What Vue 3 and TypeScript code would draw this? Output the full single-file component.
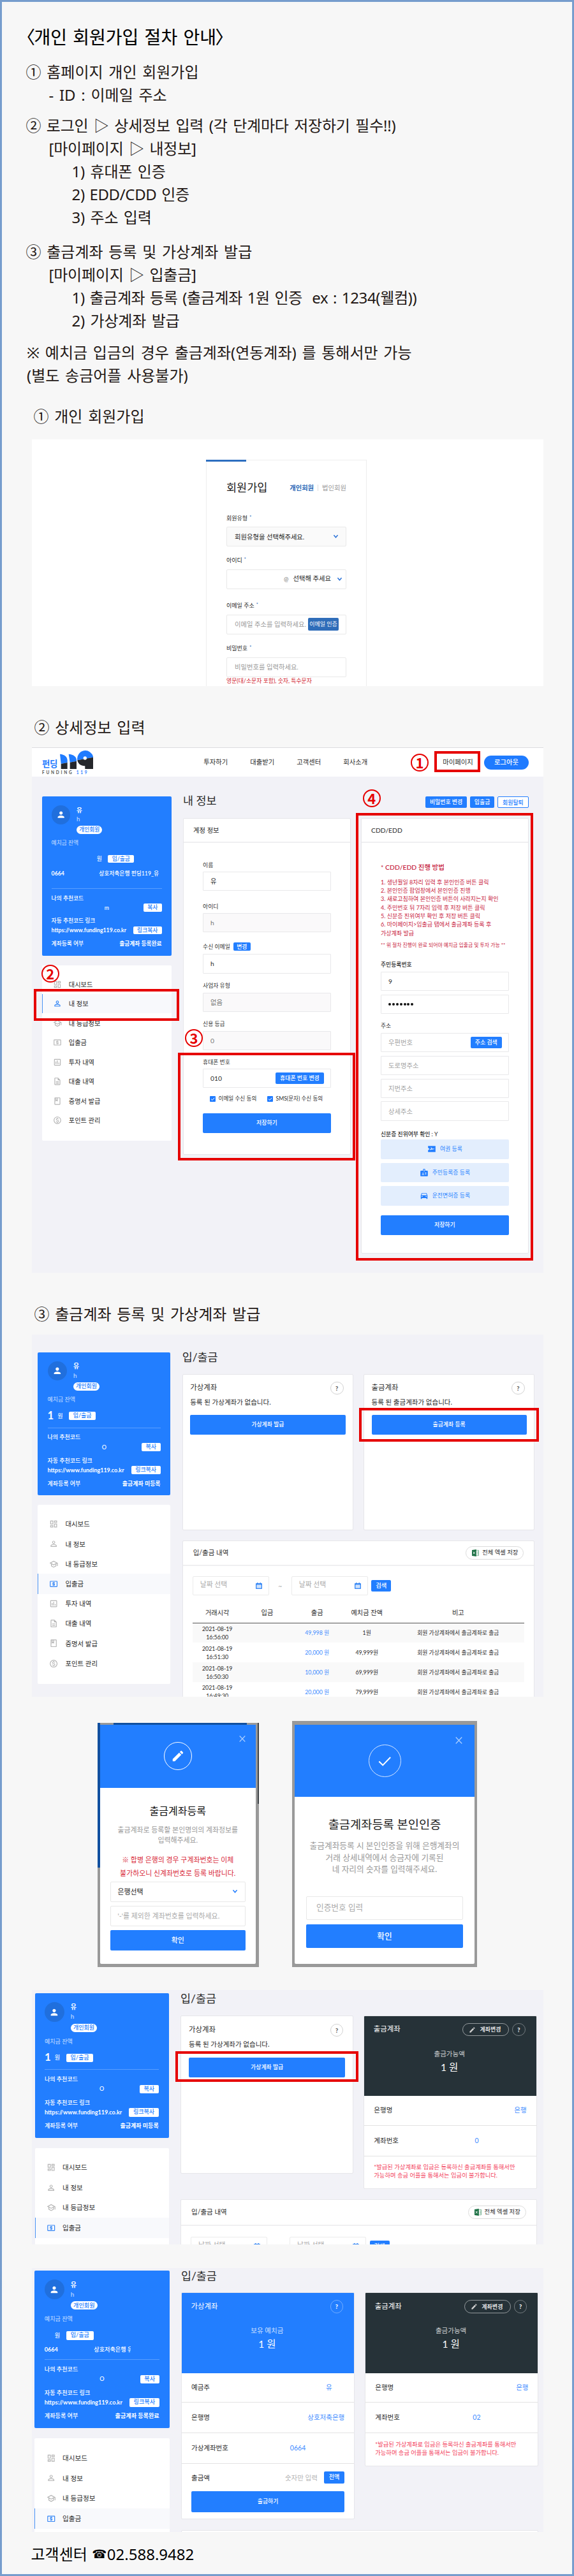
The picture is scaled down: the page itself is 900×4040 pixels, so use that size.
<script setup lang="ts">
interface Account { no: string; holder: string }
interface Screen {
  id: 'profile' | 'empty' | 'issue' | 'done'
  heading?: string
  amount: string
  code: string
  status: string
  account?: Account
  active: number
  items: number
}

const icons: Record<string, string> = {
  person: 'M12 12c2.21 0 4-1.79 4-4s-1.79-4-4-4-4 1.79-4 4 1.79 4 4 4zm0 2c-2.67 0-8 1.34-8 4v2h16v-2c0-2.66-5.33-4-8-4z',
  edit: 'M3 17.25V21h3.75L17.81 9.94l-3.75-3.75L3 17.25zM20.71 7.04c.39-.39.39-1.02 0-1.41l-2.34-2.34c-.39-.39-1.02-.39-1.41 0l-1.83 1.83 3.75 3.75 1.83-1.83z',
  calendar: 'M20 4h-2V2h-3v2H9V2H6v2H4c-1.1 0-2 .9-2 2v14c0 1.1.9 2 2 2h16c1.1 0 2-.9 2-2V6c0-1.1-.9-2-2-2zm-1 15H5V9h14v10zM7 11h2v2H7zm4 0h2v2h-2zm4 0h2v2h-2zM7 15h2v2H7zm4 0h2v2h-2zm4 0h2v2h-2z',
  ticket: 'M2 4h20v16H2v-5c1.6 0 3-1.300 3-3S3.600 9 2 9V4zm7 4 2 4-2 .6-1.200-1.200H6.500l1.200 3.200L18 12.500c1-.3 1-1.700-.4-1.600l-3.200.6L11 8H9z',
  idcard: 'M20 7h-5V4c0-1.100-.9-2-2-2h-2c-1.100 0-2 .9-2 2v3H4c-1.100 0-2 .9-2 2v11c0 1.100.9 2 2 2h16c1.100 0 2-.9 2-2V9c0-1.100-.9-2-2-2zM11 4h2v5h-2V4zM9 12c.8 0 1.500.7 1.500 1.500S9.800 15 9 15s-1.500-.7-1.500-1.500S8.200 12 9 12zm3 6H6v-.8c0-1 2-1.500 3-1.500s3 .5 3 1.500v.8zm6-1.500h-4V15h4v1.500zm0-3h-4V12h4v1.500z',
  car: 'M18.92 6.010C18.720 5.420 18.160 5 17.500 5h-11c-.66 0-1.210.42-1.420 1.010L3 12v8c0 .55.45 1 1 1h1c.55 0 1-.45 1-1v-1h12v1c0 .55.45 1 1 1h1c.55 0 1-.45 1-1v-8l-2.080-5.990zM6.500 16c-.83 0-1.500-.67-1.500-1.500S5.670 13 6.500 13s1.500.67 1.500 1.500S7.330 16 6.500 16zm11 0c-.83 0-1.500-.67-1.500-1.500s.67-1.500 1.500-1.500 1.500.67 1.500 1.500-.67 1.500-1.500 1.500zM5 11l1.500-4.500h11L19 11H5z',
}

const menu: { label: string; d: string }[] = [
  { label: '대시보드', d: 'M19 5v2h-4V5h4M9 5v6H5V5h4m10 8v6h-4v-6h4M9 17v2H5v-2h4M21 3h-8v6h8V3zM11 3H3v10h8V3zm10 8h-8v10h8V11zm-10 4H3v6h8v-6z' },
  { label: '내 정보', d: 'M12 5.900c1.160 0 2.100.94 2.100 2.100s-.94 2.100-2.100 2.100S9.900 9.160 9.900 8s.94-2.100 2.100-2.100m0 9c2.970 0 6.100 1.460 6.100 2.100v1.100H5.900V17c0-.64 3.130-2.100 6.100-2.100M12 4C9.790 4 8 5.790 8 8s1.790 4 4 4 4-1.790 4-4-1.790-4-4-4zm0 9c-2.670 0-8 1.340-8 4v3h16v-3c0-2.660-5.330-4-8-4z' },
  { label: '내 등급정보', d: 'M12 3L1 9l4 2.180v6L12 21l7-3.820v-6l2-1.090V17h2V9L12 3zm6.820 6L12 12.720 5.180 9 12 5.280 18.820 9zM17 15.990l-5 2.730-5-2.730v-3.720L12 15l5-2.730v3.720z' },
  { label: '입출금', d: 'M11 17h2v-1h1c.55 0 1-.45 1-1v-3c0-.55-.45-1-1-1h-3v-1h4V8h-2V7h-2v1h-1c-.55 0-1 .45-1 1v3c0 .55.45 1 1 1h3v1H9v2h2v1zm9-13H4c-1.110 0-1.990.89-1.990 2L2 18c0 1.110.89 2 2 2h16c1.110 0 2-.89 2-2V6c0-1.110-.89-2-2-2zm0 14H4V6h16v12z' },
  { label: '투자 내역', d: 'M9 17H7v-7h2v7zm4 0h-2V7h2v10zm4 0h-2v-4h2v4zm2 2H5V5h14v14zm0-16H5c-1.100 0-2 .9-2 2v14c0 1.100.9 2 2 2h14c1.100 0 2-.9 2-2V5c0-1.100-.9-2-2-2z' },
  { label: '대출 내역', d: 'M8 16h8v2H8zm0-4h8v2H8zm6-10H6c-1.100 0-2 .9-2 2v16c0 1.100.89 2 1.990 2H18c1.100 0 2-.9 2-2V8l-6-6zm4 18H6V4h7v5h5v11z' },
  { label: '증명서 발급', d: 'M18 2H6c-1.100 0-2 .9-2 2v16c0 1.100.9 2 2 2h12c1.100 0 2-.9 2-2V4c0-1.100-.9-2-2-2zM9 4h2v5l-1-.75L9 9V4zm9 16H6V4h1v9l3-2.250L13 13V4h5v16z' },
  { label: '포인트 관리', d: 'M12 2C6.480 2 2 6.480 2 12s4.480 10 10 10 10-4.480 10-10S17.520 2 12 2zm0 18c-4.410 0-8-3.590-8-8s3.590-8 8-8 8 3.590 8 8-3.590 8-8 8zm.31-8.860c-1.770-.45-2.340-.94-2.340-1.670 0-.84.79-1.430 2.100-1.430 1.380 0 1.900.66 1.940 1.640h1.710c-.05-1.340-.87-2.570-2.490-2.970V5H10.900v1.690c-1.510.32-2.720 1.300-2.720 2.810 0 1.790 1.490 2.690 3.660 3.210 1.950.46 2.340 1.150 2.340 1.870 0 .53-.39 1.390-2.100 1.390-1.600 0-2.230-.72-2.320-1.640H8.040c.1 1.700 1.360 2.660 2.860 2.970V19h2.340v-1.670c1.520-.29 2.720-1.160 2.730-2.770-.01-2.200-1.900-2.960-3.660-3.420z' },
]

const screens: Screen[] = [
  { id: 'profile', heading: '② 상세정보 입력', amount: '', code: 'm', status: '출금계좌 등록완료', account: { no: '0664', holder: '상호저축은행 펀딩119_유' }, active: 1, items: 8 },
  { id: 'empty', heading: '③ 출금계좌 등록 및 가상계좌 발급', amount: '1', code: 'O', status: '출금계좌 미등록', active: 3, items: 8 },
  { id: 'issue', amount: '1', code: 'O', status: '출금계좌 미등록', active: 3, items: 4 },
  { id: 'done', amount: '', code: 'O', status: '출금계좌 등록완료', account: { no: '0664', holder: '상호저축은행 유' }, active: 3, items: 4 },
]

const guide: { lv: number; text: string; cls?: string }[][] = [
  [
    { lv: 0, text: '① 홈페이지 개인 회원가입' },
    { lv: 1, text: '- ID : 이메일 주소' },
  ],
  [
    { lv: 0, text: '② 로그인 ▷ 상세정보 입력 (각 단계마다 저장하기 필수!!)', cls: 'snug' },
    { lv: 1, text: '[마이페이지 ▷ 내정보]', cls: 'snug' },
    { lv: 2, text: '1) 휴대폰 인증', cls: 'snug' },
    { lv: 2, text: '2) EDD/CDD 인증', cls: 'tight' },
    { lv: 2, text: '3) 주소 입력', cls: 'snug' },
  ],
  [
    { lv: 0, text: '③ 출금계좌 등록 및 가상계좌 발급' },
    { lv: 1, text: '[마이페이지 ▷ 입출금]', cls: 'snug' },
    { lv: 2, text: '1) 출금계좌 등록 (출금계좌 1원 인증  ex : 1234(웰컴))', cls: 'tight' },
    { lv: 2, text: '2) 가상계좌 발급', cls: 'snug' },
  ],
  [
    { lv: 0, text: '※ 예치금 입금의 경우 출금계좌(연동계좌) 를 통해서만 가능' },
    { lv: 0, text: '(별도 송금어플 사용불가)' },
  ],
]

const nav = ['투자하기', '대출받기', '고객센터', '회사소개']

const accountFields = [
  { label: '이름', value: '유', locked: false },
  { label: '아이디', value: 'h', locked: true },
  { label: '수신 이메일', value: 'h', locked: false, badge: '변경' },
  { label: '사업자 유형', value: '없음', locked: true },
  { label: '신용 등급', value: '0', locked: true },
  { label: '휴대폰 번호', value: '010', locked: false, action: '휴대폰 번호 변경' },
]

const steps = [
  '1. 생년월일 8자리 입력 후 본인인증 버튼 클릭',
  '2. 본인인증 팝업창에서 본인인증 진행',
  '3. 새로고침하여 본인인증 버튼이 사라지는지 확인',
  '4. 주민번호 뒤 7자리 입력 후 저장 버튼 클릭',
  '5. 신분증 진위여부 확인 후 저장 버튼 클릭',
  '6. 마이페이지>입출금 탭에서 출금계좌 등록 후',
  '가상계좌 발급',
]

const idDocs = [
  { icon: 'ticket', label: '여권 등록' },
  { icon: 'idcard', label: '주민등록증 등록' },
  { icon: 'car', label: '운전면허증 등록' },
]

const history = [
  { time: '16:56:00', out: '49,998 원', left: '1원' },
  { time: '16:51:30', out: '20,000 원', left: '49,999원' },
  { time: '16:50:30', out: '10,000 원', left: '69,999원' },
  { time: '16:49:30', out: '20,000 원', left: '79,999원' },
]
</script>

<template>
  <div class="page">
    <h1><i class="lt">〈</i>개인 회원가입 절차 안내<i class="gt">〉</i></h1>
    <div v-for="(g, gi) in guide" :key="gi" class="guide" :class="'g' + gi">
      <p v-for="l in g" :key="l.text" :class="['lv' + l.lv, l.cls]">{{ l.text }}</p>
    </div>

    <h2 class="h-signup">① 개인 회원가입</h2>
    <section class="signup">
      <div class="s-card">
        <div class="s-head">
          <b>회원가입</b>
          <div class="s-tabs"><span class="on">개인회원</span><i></i><span>법인회원</span></div>
        </div>
        <label class="l1">회원유형<sup>*</sup></label>
        <div class="s-box grey"><span>회원유형을 선택해주세요.</span>
          <svg class="chev" viewBox="0 0 10 8"><path d="M1.500 1.500 5 5.500 8.500 1.500" /></svg></div>
        <label class="l2">아이디<sup>*</sup></label>
        <div class="s-box mail"><small>@</small><span>선택해 주세요</span>
          <svg class="chev" viewBox="0 0 10 8"><path d="M1.500 1.500 5 5.500 8.500 1.500" /></svg></div>
        <label class="l3">이메일 주소<sup>*</sup></label>
        <div class="s-box ph"><span>이메일 주소를 입력하세요.</span><em>이메일 인증</em></div>
        <label class="l4">비밀번호<sup>*</sup></label>
        <div class="s-box ph"><span>비밀번호를 입력하세요.</span></div>
        <p class="s-err">영문(대/소문자 포함), 숫자, 특수문자</p>
      </div>
    </section>

    <template v-for="s in screens" :key="s.id">
      <h2 v-if="s.heading" :class="'h-' + s.id">{{ s.heading }}</h2>
      <section class="panel" :class="s.id">
        <header v-if="s.id === 'profile'" class="top">
          <div class="logo">
            <div class="logo-row">
              <b>펀딩</b>
              <svg viewBox="281 200 157 87">
                <path fill="#1f7bff" d="M281 217 286 263 316 257V246C316 230 302 218 281 217ZM322 217 328 256 359 250V245C359 230 345 218 322 217ZM363 246A37.500 38 0 0 1 438 232Z" />
                <path fill="#25272b" d="M286 263 316 257V287H286ZM328 256 359 250V287H328ZM363 246 438 232V287H399V273C380 274 365 262 363 246Z" />
                <circle cx="399" cy="236" r="8" fill="#fff" />
              </svg>
            </div>
            <div class="logo-sub">FUNDING <i>119</i></div>
          </div>
          <nav><span v-for="n in nav" :key="n">{{ n }}</span></nav>
          <span class="mypage">마이페이지</span>
          <span class="logout">로그아웃</span>
        </header>

        <div class="body">
          <aside>
            <div class="user">
              <div class="u-head">
                <div class="avatar"><svg viewBox="0 0 24 24"><path :d="icons.person" /></svg></div>
                <div class="ident"><b>유</b><span>h</span><em>개인회원</em></div>
              </div>
              <div class="u-cap">예치금 잔액</div>
              <div class="u-bal"><b>{{ s.amount }}</b><span>원</span><em>입/출금</em></div>
              <div v-if="s.account" class="u-acc"><span>{{ s.account.no }}</span><span class="holder">{{ s.account.holder }}</span></div>
              <hr />
              <div class="u-t1">나의 추천코드</div>
              <div class="u-row code"><span>{{ s.code }}</span><em>복사</em></div>
              <div class="u-t2">자동 추천코드 링크</div>
              <div class="u-row link"><span>https://www.funding119.co.kr</span><em>링크복사</em></div>
              <div class="u-row reg"><span>계좌등록 여부</span><b>{{ s.status }}</b></div>
            </div>
            <ul class="menu">
              <li v-for="(m, i) in menu.slice(0, s.items)" :key="m.label" :class="{ active: i === s.active }">
                <svg viewBox="0 0 24 24"><path :d="m.d" fill-rule="evenodd" /></svg>{{ m.label }}
              </li>
            </ul>
          </aside>

          <main v-if="s.id === 'profile'">
            <div class="p-title">
              <h3>내 정보</h3>
              <span class="btn">비밀번호 변경</span><span class="btn">입출금</span><span class="btn line">회원탈퇴</span>
            </div>
            <div class="p-cards">
              <div class="card acct">
                <div class="c-head">계정 정보</div>
                <div v-for="f in accountFields" :key="f.label" class="field">
                  <label>{{ f.label }}<em v-if="f.badge">{{ f.badge }}</em></label>
                  <div class="box" :class="{ locked: f.locked }">{{ f.value }}<span v-if="f.action" class="btn">{{ f.action }}</span></div>
                </div>
                <div class="checks">
                  <span v-for="c in ['이메일 수신 동의', 'SMS(문자) 수신 동의']" :key="c">
                    <svg viewBox="0 0 9 9"><rect width="9" height="9" rx="1" fill="#1f7bff" /><path d="M2 4.600 3.900 6.400 7.200 2.800" fill="none" stroke="#fff" /></svg>{{ c }}
                  </span>
                </div>
                <div class="save">저장하기</div>
              </div>
              <div class="card cdd">
                <div class="c-head">CDD/EDD</div>
                <div class="how">* CDD/EDD 진행 방법</div>
                <ol><li v-for="t in steps" :key="t">{{ t }}</li></ol>
                <div class="note">** 위 절차 진행이 완료 되어야 예치금 입출금 및 투자 가능 **</div>
                <label class="b">주민등록번호</label>
                <div class="box">9</div>
                <div class="box dots"><i v-for="n in 7" :key="n"></i></div>
                <label class="addr">주소</label>
                <div class="box ph">우편번호<span class="btn">주소 검색</span></div>
                <div class="box ph">도로명주소</div>
                <div class="box ph">지번주소</div>
                <div class="box ph">상세주소</div>
                <label class="b verify">신분증 진위여부 확인 <span>: Y</span></label>
                <div v-for="d in idDocs" :key="d.label" class="doc">
                  <svg viewBox="0 0 24 24"><path :d="icons[d.icon]" fill-rule="evenodd" /></svg>{{ d.label }}
                </div>
                <div class="save">저장하기</div>
              </div>
            </div>
          </main>

          <main v-else>
            <h3>입/출금</h3>
            <div class="w-cards">
              <div v-if="s.id !== 'done'" class="card w-empty">
                <div class="w-head"><span>가상계좌</span><q>?</q></div>
                <p>등록 된 가상계좌가 없습니다.</p>
                <div class="save">가상계좌 발급</div>
              </div>
              <div v-else class="card w-bank">
                <div class="w-top blue">
                  <div class="w-head"><span>가상계좌</span><q>?</q></div>
                  <div class="w-cap">보유 예치금</div>
                  <div class="w-amt">1 원</div>
                </div>
                <div class="kv"><span>예금주</span><a class="owner">유</a></div>
                <div class="kv"><span>은행명</span><a>상호저축은행</a></div>
                <div class="kv"><span>가상계좌번호</span><a class="vno">0664</a></div>
                <div class="kv out"><span>출금액</span><small>숫자만 입력</small><em>전액</em></div>
                <div class="save">출금하기</div>
              </div>

              <div v-if="s.id === 'empty'" class="card w-empty">
                <div class="w-head"><span>출금계좌</span><q>?</q></div>
                <p>등록 된 출금계좌가 없습니다.</p>
                <div class="save">출금계좌 등록</div>
              </div>
              <div v-else class="card w-bank short">
                <div class="w-top dark">
                  <div class="w-head"><span>출금계좌</span>
                    <div class="chg"><svg viewBox="0 0 24 24"><path :d="icons.edit" /></svg>계좌변경</div><q>?</q></div>
                  <div class="w-cap">출금가능액</div>
                  <div class="w-amt">1 원</div>
                </div>
                <div class="kv"><span>은행명</span><a>은행</a></div>
                <div class="kv"><span>계좌번호</span><a class="ano">{{ s.id === 'done' ? '02' : '0' }}</a></div>
                <div class="warn">*발급된 가상계좌로 입금은 등록하신 출금계좌를 통해서만<br />가능하며 송금 어플을 통해서는 입금이 불가합니다.</div>
              </div>
            </div>

            <div class="card hist">
              <template v-if="s.id !== 'done'">
                <div class="h-head"><span>입/출금 내역</span>
                  <div class="xls"><svg viewBox="0 0 12 12"><path fill="#1d7145" d="M0 1 7.500 0v12L0 11z" /><path d="M8 1.500h3.500v9H8M9 4h2M9 6h2M9 8h2" fill="none" stroke="#4c9a70" stroke-width=".8" /><path d="m2 4 3.200 4M5.200 4 2 8" stroke="#fff" /></svg>전체 엑셀 저장</div>
                </div>
                <div class="dates">
                  <div class="date">날짜 선택<svg viewBox="0 0 24 24"><path :d="icons.calendar" fill-rule="evenodd" /></svg></div>
                  <span>~</span>
                  <div class="date">날짜 선택<svg viewBox="0 0 24 24"><path :d="icons.calendar" fill-rule="evenodd" /></svg></div>
                  <b>검색</b>
                </div>
                <div v-if="s.id === 'empty'" class="table">
                  <div class="tr th"><span>거래시각</span><span>입금</span><span>출금</span><span>예치금 잔액</span><span>비고</span></div>
                  <div v-for="r in history" :key="r.time" class="tr">
                    <span>2021-08-19<br />{{ r.time }}</span><span></span><span class="out">{{ r.out }}</span><span>{{ r.left }}</span><span>회원 가상계좌에서 출금계좌로 출금</span>
                  </div>
                </div>
              </template>
            </div>
          </main>
        </div>

        <template v-if="s.id === 'profile'">
          <div class="mark m1"></div><div class="mark m2"></div><div class="mark m3"></div><div class="mark m4"></div>
          <div v-for="n in 4" :key="n" class="num" :class="'n' + n">{{ n }}</div>
        </template>
        <div v-else-if="s.id !== 'done'" class="mark"></div>
      </section>

      <div v-if="s.id === 'empty'" class="modals">
        <div class="shade sh1">
          <div class="modal">
            <div class="m-top">
              <svg class="x" viewBox="0 0 10 10"><path d="M.7.5 9.300 9.500M9.300.5.7 9.500" /></svg>
              <div class="ring"><svg viewBox="0 0 24 24"><path :d="icons.edit" fill="#fff" /></svg></div>
            </div>
            <h4>출금계좌등록</h4>
            <p class="m-desc">출금계좌로 등록할 본인명의의 계좌정보를<br />입력해주세요.</p>
            <p class="m-red">※ 합병 은행의 경우 구계좌번호는 이체<br />불가하오니 신계좌번호로 등록 바랍니다.</p>
            <div class="m-box sel">은행선택<svg class="chev" viewBox="0 0 10 8"><path d="M1.500 1.500 5 5.500 8.500 1.500" /></svg></div>
            <div class="m-box">'-'를 제외한 계좌번호를 입력하세요.</div>
            <div class="m-ok">확인</div>
          </div>
        </div>
        <div class="shade sh2">
          <div class="modal">
            <div class="m-top">
              <svg class="x" viewBox="0 0 10 10"><path d="M.7.5 9.300 9.500M9.300.5.7 9.500" /></svg>
              <div class="ring"><svg viewBox="0 0 24 24"><path d="M2.500 12.500 9 19 22 5.500" fill="none" stroke="#fff" stroke-width="2.200" /></svg></div>
            </div>
            <h4>출금계좌등록 본인인증</h4>
            <p class="m-desc">출금계좌등록 시 본인인증을 위해 은행계좌의<br />거래 상세내역에서 송금자에 기록된<br />네 자리의 숫자를 입력해주세요.</p>
            <div class="m-box">인증번호 입력</div>
            <div class="m-ok">확인</div>
          </div>
        </div>
      </div>
    </template>

    <footer><span>고객센터</span><i>☎</i><span class="tel">02.588.9482</span></footer>
  </div>
</template>

<style>
body { margin: 0; background: #f7f7f7; }
</style>

<style scoped>
* { box-sizing: border-box; margin: 0; padding: 0; }
em, i { font-style: normal; }
.page {
  width: 900px; height: 4040px; overflow: hidden; border: 3px solid #769dcd; background: #f7f7f7;
  font-family: "Noto Sans", "Noto Sans CJK KR", sans-serif; font-size: 24px; line-height: 36px; color: #231815;
}
h1 { margin: 35px 0 0 38px; height: 38px; line-height: 38px; font-size: 28px; font-weight: 400; -webkit-text-stroke: .15px #000; font-family: "Noto Sans CJK KR", sans-serif; font-feature-settings: "halt"; color: #000; word-spacing: 3px; }
h1 .lt { margin-right: -1.500px; }
h1 .gt { margin-left: -1.500px; }
.guide { word-spacing: 2.500px; white-space: pre; }
.guide p { height: 36px; }
.snug { letter-spacing: -.2px; }
.tight { letter-spacing: -.35px; word-spacing: 1.800px; }
.g0 { margin-top: 19px; }
.g1 { margin-top: 12px; }
.g2 { margin-top: 18px; }
.g3 { margin-top: 14px; }
.lv0 { margin-left: 37.500px; }
.g3 .lv0 { margin-left: 39px; }
.lv1 { margin-left: 73.500px; }
.lv2 { margin-left: 109.500px; }
h2 { height: 36px; margin-left: 50.500px; font-size: 24px; font-weight: 400; word-spacing: 2.500px; }
.h-signup { margin-top: 28px; margin-left: 49.500px; }
.h-profile { margin-top: 47px; }
.h-empty { margin-top: 47px; }

.signup, .panel, .shade { font-family: Lato, "Noto Sans CJK KR", sans-serif; }
.signup { margin: 18px 0 0 47px; width: 802px; height: 387px; background: #fff; overflow: hidden; padding-top: 32px; }
.s-card { width: 252px; height: 380px; margin-left: 273px; border: 1px solid #eee; padding: 0 31px; font-size: 10.300px; line-height: 12px; color: #222; position: relative; }
.s-card::before { content: ''; position: absolute; left: -1px; top: -1px; width: 63px; height: 3px; background: #2e6fc0; }
.s-head { display: flex; align-items: center; justify-content: space-between; margin-top: 31px; height: 24px; }
.s-head b { font-size: 17.500px; font-weight: 400; }
.s-tabs { display: flex; align-items: center; color: #999; }
.s-tabs .on { color: #2565b5; font-weight: 700; }
.s-tabs i { width: 1px; height: 10px; background: #ddd; margin: 0 6px; }
.s-card label { display: block; height: 12px; font-size: 9px; font-weight: 400; }
.s-card sup { font-size: 7px; line-height: 0; color: #2565b5; margin-left: 3px; vertical-align: 2px; }
.l1 { margin: 30px 0 7px; }
.l2 { margin: 16px 0 8px; }
.l3 { margin: 20px 0 8px; }
.l4 { margin: 16px 0 8px; }
.s-box { height: 31px; border: 1px solid #e9e9e9; border-radius: 2px; display: flex; align-items: center; justify-content: space-between; padding: 0 11px 0 12px; }
.s-box.grey { background: #fafafa; }
.s-box.mail { justify-content: flex-end; padding-right: 5px; padding-bottom: 2px; height: 30.500px; }
.s-box.mail small { color: #777; font-size: 9px; margin: 3px 7px 0 0; }
.s-box.mail .chev { margin: 3px 0 0 9px; }
.s-box.ph span { color: #999; }
.s-box em { height: 20px; width: 48px; line-height: 19px; text-align: center; white-space: nowrap; background: #2f6db9; color: #fff; font-size: 9px; border-radius: 2px; }
.chev { width: 9px; height: 7px; fill: none; stroke: #2a72d8; stroke-width: 1.700; }
.s-err { color: #d0202c; font-size: 8.900px; white-space: nowrap; }

.panel { position: relative; margin-left: 47px; width: 801.500px; background: #f2f2f7; overflow: hidden; font-size: 10.300px; line-height: 14px; color: #2b2b2b; }
.profile { margin-top: 13px; height: 824px; border-top: 1px solid #dcdcdf; --u: .962px; --ml: 15.700px; --gap: 18px; }
.empty { margin-top: 14px; height: 568px; --u: .984px; --ml: 9.300px; --gap: 18.400px; }
.issue { margin-top: 36px; height: 399px; --u: .994px; --ml: 4.500px; --gap: 18.400px; }
.done { margin-top: 37px; height: 414px; --u: 1px; --ml: 4.300px; --gap: 18.300px; }
.body { display: flex; gap: var(--gap); padding-left: var(--ml); }
.profile .body { padding-top: 31px; }
.empty .body { padding-top: 27.600px; }
.issue .body { padding-top: 5px; }
.done .body { padding-top: 4px; }

.top { height: 45px; background: #fff; display: flex; align-items: flex-start; }
.logo { width: 90px; margin: 4px 0 0 16px; }
.logo-row { display: flex; align-items: flex-start; height: 29px; }
.logo-row b { color: #1f7bff; font-size: 13.500px; letter-spacing: -.4px; line-height: 16px; width: 28px; margin-top: 13px; }
.logo-row svg { width: 52.300px; height: 29px; }
.logo-sub { font-size: 6.500px; line-height: 8px; margin-top: 2px; letter-spacing: 2.750px; color: #555; font-weight: 700; white-space: nowrap; }
.logo-sub i { color: #1f7bff; }
nav { display: flex; margin: 15px 0 0 163.300px; width: 375px; }
nav span { width: 73px; white-space: nowrap; }
.mypage { margin-top: 15px; width: 65px; white-space: nowrap; }
.logout { margin-top: 12px; height: 22px; width: 69.500px; border-radius: 11px; line-height: 20px; text-align: center; background: #1f7bff; color: #fff; font-weight: 500; }

aside { flex: none; width: calc(var(--u) * 211.400); }
.user { height: 250px; background: #227eff; border-radius: 2px; color: #fff; padding: calc(var(--u) * 14.400) calc(var(--u) * 16) 0 calc(var(--u) * 15.500); font-size: calc(var(--u) * 9.100); line-height: calc(var(--u) * 14); font-weight: 500; white-space: nowrap; }
.empty .user { height: 224px; }
.issue .user { height: 227px; }
.done .user { height: 247.400px; }
.u-head { display: flex; height: calc(var(--u) * 47); }
.avatar { width: calc(var(--u) * 31); height: calc(var(--u) * 31); border-radius: 50%; background: #206fdd; display: flex; align-items: center; justify-content: center; }
.avatar svg { width: calc(var(--u) * 16); fill: #fff; }
.ident { margin-left: calc(var(--u) * 10); display: flex; flex-direction: column; align-items: flex-start; }
.ident b { font-size: calc(var(--u) * 10); line-height: calc(var(--u) * 16); }
.ident span { opacity: .75; font-weight: 400; font-size: calc(var(--u) * 10); }
.ident em { margin-top: calc(var(--u) * 3.600); height: calc(var(--u) * 13.400); line-height: calc(var(--u) * 13); border-radius: 7px; padding: 0 calc(var(--u) * 4.300); background: #fff; color: #227eff; font-weight: 700; }
.u-cap { margin-top: calc(var(--u) * 7.600); opacity: .75; font-weight: 400; }
.u-bal { margin-top: calc(var(--u) * 11); height: calc(var(--u) * 16); display: flex; align-items: center; }
.u-bal b { width: calc(var(--u) * 16); font-size: calc(var(--u) * 17); font-weight: 700; margin-top: -3px; }
.profile .u-bal b { width: calc(var(--u) * 74); }
.u-bal span { width: calc(var(--u) * 18); opacity: .9; }
.user em { font-weight: 500; }
.u-bal em { width: calc(var(--u) * 43); }
.u-bal em, .u-row em { height: calc(var(--u) * 13.300); line-height: calc(var(--u) * 12.800); border-radius: 2px; background: #fff; color: #227eff; text-align: center; }
.u-acc { margin-top: calc(var(--u) * 7); display: flex; }
.profile .u-acc { margin-top: calc(var(--u) * 8.500); }
.u-acc span:first-child { width: calc(var(--u) * 77.500); font-weight: 700; }
.done .holder { width: 57.500px; overflow: hidden; }
hr { border: 0; height: 1px; background: rgba(255, 255, 255, .25); margin-top: calc(var(--u) * 10); }
.done hr { margin-top: 8px; }
.profile hr { margin-top: 17px; }
.u-t1 { margin-top: calc(var(--u) * 8); }
.u-t2 { margin-top: calc(var(--u) * 7.500); }
.u-row { display: flex; align-items: center; justify-content: space-between; height: calc(var(--u) * 14); margin-top: calc(var(--u) * 1.300); }
.code span { margin-left: calc(var(--u) * 86.500); }
.code em { width: calc(var(--u) * 30); }
.link em { width: calc(var(--u) * 46.700); }
.link span { width: calc(var(--u) * 123); overflow: hidden; font-weight: 700; }
.u-row.reg { margin-top: calc(var(--u) * 7.200); }
.menu { list-style: none; margin-top: calc(var(--u) * 15.700); background: #fff; border-radius: 2px; height: 275px; padding-top: calc(var(--u) * 15); }
.empty .menu { height: 281px; }
.issue .menu, .done .menu { height: 284px; }
.menu li { height: calc(var(--u) * 31.700); display: flex; align-items: center; font-size: calc(var(--u) * 10.600); padding-left: calc(var(--u) * 17.300); border-left: 1px solid transparent; }
.menu li.active { background: #f8f9fc; border-left-color: #4a94f5; }
.menu svg { width: calc(var(--u) * 14.500); margin-right: calc(var(--u) * 11); fill: #b5b5b5; }
.menu .active svg { fill: #3385f5; }

h3 { font-size: 17.400px; font-weight: 400; line-height: 20px; color: #2b2b2b; }
.card { background: #fff; border: 1px solid #e6e6ea; border-radius: 2px; }
.btn { background: #227eff; color: #fff; font-weight: 500; font-size: 8.900px; border-radius: 2px; height: 18px; line-height: 17px; text-align: center; white-space: nowrap; }
.p-title { display: flex; height: 18px; width: 541.700px; }
.p-title h3 { flex: 1; margin-top: -3.500px; }
.p-title .btn { width: 65px; margin-left: 5px; }
.p-title .btn:nth-of-type(2) { width: 38px; }
.p-title .btn.line { width: 48.700px; border: 1px solid #227eff; background: #fff; color: #227eff; }
.p-cards { display: flex; gap: 16.300px; margin-top: 16px; align-items: flex-start; }
.p-cards .card { width: 262.700px; padding: 0 30px; }
.acct { height: 528px; }
.cdd { height: 683.300px; }
.c-head { margin: 0 -30px; height: 38px; line-height: 36px; padding-left: 15px; border-bottom: 2px solid #efeff1; }
.field label, .cdd label { display: block; font-size: 8.800px; line-height: 12px; height: 12px; }
.field { height: 65px; }
.field:nth-of-type(2) { margin-top: 29px; }
.field:nth-of-type(3), .field:nth-of-type(4) { height: 62px; }
.field:nth-of-type(5), .field:nth-of-type(6) { height: 60.200px; }
.field:nth-of-type(7) { height: 57px; }
.field .box { margin-top: 3.600px; }
.field:nth-of-type(4) .box { margin-top: 6.300px; }
.field:nth-of-type(5) .box, .field:nth-of-type(6) .box { margin-top: 5px; }
.field label em { display: inline-block; margin-left: 5px; width: 27px; height: 13px; line-height: 13px; text-align: center; background: #227eff; color: #fff; border-radius: 2px; font-weight: 500; }
.box { height: 30.300px; border: 1px solid #e8e8ea; border-radius: 1px; display: flex; align-items: center; justify-content: space-between; padding: 0 10px 0 11px; }
.box.locked { background: #faf9fa; color: #777; }
.box .btn { padding: 0 7px; }
.checks { display: flex; padding-left: 11px; font-size: 8.600px; line-height: 12px; height: 12px; white-space: nowrap; }
.checks span { width: 90px; display: flex; align-items: center; }
.checks svg { width: 9px; height: 9px; margin-right: 4.500px; }
.save { background: #227eff; color: #fff; height: 31px; line-height: 29px; border-radius: 2px; text-align: center; font-size: 8.900px; font-weight: 500; }
.acct .save { margin-top: 16.500px; }
.how { margin-top: 31px; color: #c41436; font-weight: 500; line-height: 14px; font-size: 10.400px; }
ol { list-style: none; margin-top: 9.500px; color: #c8203c; font-size: 9px; line-height: 13.350px; white-space: nowrap; font-weight: 400; }
.note { color: #c8203c; font-size: 7.900px; line-height: 12px; margin-top: 6px; white-space: nowrap; font-weight: 400; }
.cdd label.b { font-weight: 500; margin: 19px 0 5px; }
.cdd .box + .box { margin-top: 5.500px; }
.dots { justify-content: flex-start; gap: 1.900px; }
.dots i { width: 4px; height: 4px; border-radius: 50%; background: #111; }
.cdd label.addr { margin: 13px 0 5px; }
.box.ph { color: #a5a5a5; }
.cdd .box.ph .btn { padding: 0 7px; }
.cdd label.verify { margin: 15px 0 2.500px; }
.verify span { font-weight: 400; }
.doc { height: 30.500px; margin-bottom: 6px; background: #e3eefd; border-radius: 2px; color: #227eff; font-size: 8.900px; display: flex; align-items: center; justify-content: center; gap: 6px; }
.doc svg { width: 14px; fill: #227eff; }
.cdd .save { margin-top: 15px; }

.mark { position: absolute; border: 4px solid #e60000; }
.m1 { left: 631.300px; top: 5px; width: 72px; height: 33px; }
.m2 { left: 3.300px; top: 378px; width: 227.500px; height: 50px; }
.m3 { left: 229.300px; top: 478px; width: 277.700px; height: 169px; }
.m4 { left: 508.300px; top: 102px; width: 277.800px; height: 702px; }
.num { position: absolute; width: 28px; height: 28px; border: 2px solid #e60000; border-radius: 50%; color: #e60000; font: 700 22px/23px "Noto Sans CJK KR", sans-serif; text-align: center; }
.n1 { left: 594px; top: 8.500px; }
.n2 { left: 14.700px; top: 340px; }
.n3 { left: 240px; top: 441px; }
.n4 { left: 518.700px; top: 64.500px; }
.empty .mark { left: 513.300px; top: 114.500px; width: 282px; height: 53.500px; }
.issue .mark { left: 225px; top: 96px; width: 286.500px; height: 48px; }

.panel main { flex: none; }
.empty main { width: 552.600px; --pad: 11.500px; }
.issue main { width: 558.600px; --pad: 12px; }
.done main { width: 560.500px; --pad: 15.500px; }
.empty h3 { margin-top: -1.500px; }
.issue h3 { margin-top: -1px; }
.done h3 { margin-top: -1.500px; }
.w-cards { display: grid; grid-template-columns: 1fr 1fr; gap: 16px; align-items: start; margin-top: 15.500px; }
.w-empty { height: 245px; padding: 11px var(--pad); }
.issue .w-empty { height: 248px; padding-top: 12px; }
.w-head { display: flex; align-items: center; height: 21px; font-size: 11.400px; }
.w-head span { flex: 1; padding-bottom: 2px; }
q { quotes: none; width: 20.700px; height: 20.700px; line-height: 19px; border: 1px solid #d2d2d2; border-radius: 50%; text-align: center; font-size: 9px; font-weight: 900; color: #555; }
.w-empty q { margin-right: 3px; }
.w-empty p { margin-top: 4px; height: 14px; font-size: 10.500px; }
.w-empty .save { margin-top: 14px; }
.empty .w-empty .save { margin-top: 13.500px; }
.w-bank { height: 272px; overflow: hidden; }
.done .w-bank { height: 273px; }
.done .w-bank:first-child { height: 356px; }
.w-top { height: 126.500px; padding: 12px 18px 0 15.500px; color: #fff; margin: -1px -1px 0; }
.blue { background: #227eff; }
.dark { background: #263238; }
.w-top q { color: #fff; border-color: rgba(255, 255, 255, .35); background: transparent; }
.chg { display: flex; align-items: center; height: 20.700px; width: 73px; border: 1px solid rgba(255, 255, 255, .5); border-radius: 11px; padding-left: 9px; font-size: 9px; font-weight: 500; margin-right: 4.500px; white-space: nowrap; }
.chg svg { width: 11px; fill: #ccc; margin-right: 6px; }
.w-cap { text-align: center; margin-top: 20px; font-size: 10.500px; opacity: .75; }
.w-amt { text-align: center; margin-top: 5px; font-size: 15.500px; line-height: 18px; }
.kv { display: flex; align-items: flex-start; justify-content: space-between; height: 48px; padding: 16px 15px 0; border-bottom: 1px solid #e3e3e3; font-size: 10.500px; }
.w-top + .kv { height: 46.500px; padding-top: 15px; }
.kv a { color: #3d8bff; }
.kv .owner { margin-right: 19.500px; }
.kv .vno { margin-right: 61px; }
.kv .ano { margin-right: 75px; }
.kv.out { border: 0; height: 43px; align-items: center; padding: 0 15px; }
.kv.out span { flex: 1; }
.kv.out small { font-size: 10.500px; color: #b5b5b5; margin-right: 10px; }
.kv.out em { width: 32.300px; height: 19px; line-height: 18px; text-align: center; border-radius: 2px; background: #227eff; color: #fff; font-size: 9px; font-weight: 500; }
.w-bank .save { margin: 0 15px; height: 33px; line-height: 31px; }
.warn { padding: 10.500px 15px; color: #f3415c; font-size: 9.300px; line-height: 13.300px; white-space: nowrap; }

.hist { margin-top: 16px; height: 300px; }
.done .hist { margin-top: 17px; }
.h-head { height: 39.500px; padding: 0 16px; display: flex; align-items: center; justify-content: space-between; border-bottom: 2px solid #efeff1; font-size: 10.500px; }
.xls { display: flex; align-items: center; height: 21px; width: 91px; border: 1px solid #dcdcdc; border-radius: 11px; padding-left: 9px; font-size: 9.300px; white-space: nowrap; }
.xls svg { width: 11px; margin-right: 5px; }
.dates { display: flex; align-items: center; padding: 16px 15px 0; height: 46px; color: #aaa; }
.date { width: 120px; height: 30.200px; border: 1px solid #ebebeb; border-radius: 2px; padding: 0 9px 4px 11px; display: flex; align-items: center; justify-content: space-between; font-size: 10.800px; }
.date svg { width: 12px; fill: #3b8af5; margin-top: 4px; }
.dates > span { width: 35px; text-align: center; }
.dates b { margin-left: 5.500px; width: 31px; height: 18px; line-height: 17px; border-radius: 2px; background: #227eff; color: #fff; text-align: center; font-size: 9.300px; font-weight: 500; }
.table { padding: 11px 15px 0; font-size: 8.800px; line-height: 13px; }
.tr { display: grid; grid-template-columns: 78px 78.500px 78px 78px 1fr; height: 30.800px; align-items: center; text-align: center; white-space: nowrap; }
.tr.th { height: 32.500px; padding-top: 2px; font-size: 10.200px; border-bottom: 1px solid #555; }
.tr:nth-child(even) { background: #f9f9f9; }
.tr .out { color: #3d8bff; }
.issue .h-head { height: 41px; }
.issue .dates { height: 48px; padding-top: 17px; }
.issue .date { height: 31px; }

.modals { position: relative; display: flex; align-items: flex-end; margin: 38px 0 0 150px; gap: 52.500px; height: 386px; }
.shade { background: #999; font-size: 10.900px; line-height: 16px; color: #999; }
.sh1 { width: 252.500px; height: 383px; padding: 3px 4.500px 4px 3.500px;
  background: linear-gradient(#999, #999) 4px 0 / 21px 3px no-repeat, linear-gradient(#104f9f, #104f9f) 0 0 / 234px 3px no-repeat,
    linear-gradient(#104f9f, #104f9f) 0 0 / 4px 227px no-repeat, linear-gradient(#3e4347, #3e4347) 100% 0 / 2px 127px no-repeat, #999; }
.sh2 { width: 290px; height: 386px; padding: 6px 4px 5px; font-size: 12.700px; line-height: 18.600px; }
.modal { background: #fff; height: 375px; padding: 0 16px; border-radius: 0 0 2px 2px; overflow: hidden; text-align: center; }
.sh2 .modal { padding: 0 18px; }
.m-top { position: relative; margin: 0 -18px; height: 98.500px; background: #227eff; display: flex; justify-content: center; padding-top: 27px; }
.sh2 .m-top { height: 113px; padding-top: 31px; }
.x { position: absolute; right: 18px; top: 17px; width: 10px; height: 10px; fill: none; stroke: #a9cdff; stroke-width: 1.200; }
.sh2 .x { top: 19px; right: 19px; width: 11px; height: 11px; }
.ring { width: 44px; height: 44px; border: 1.500px solid #fff; border-radius: 50%; display: flex; align-items: center; justify-content: center; }
.ring svg { width: 22px; }
.sh2 .ring { width: 51px; height: 51px; border-color: #d5e6ff; }
h4 { font-size: 16px; font-weight: 400; color: #111; line-height: 22px; margin-top: 25.500px; }
.sh2 h4 { font-size: 18.700px; color: #222; line-height: 24px; margin-top: 31px; }
.m-desc { margin-top: 11px; white-space: nowrap; }
.sh2 .m-desc { margin-top: 12px; }
.m-red { margin-top: 11.500px; line-height: 21.700px; color: #d8293a; white-space: nowrap; }
.m-box { margin-top: 6px; height: 32px; border: 1px solid #e8e8e8; border-radius: 2px; display: flex; align-items: center; justify-content: space-between; padding: 0 11px; color: #aaa; }
.m-box.sel { margin-top: 2px; color: #222; }
.m-box .chev { stroke: #227eff; }
.sh2 .m-box { margin-top: 33px; height: 37px; padding: 0 15px 2px; }
.m-ok { margin-top: 6px; height: 32.500px; line-height: 32px; background: #227eff; color: #fff; border-radius: 2px; font-weight: 500; }
.sh2 .m-ok { margin-top: 7px; height: 37px; line-height: 36px; }
footer { display: flex; margin: 17px 0 0 45.500px; font-size: 24px; color: #000; }
footer i { font: 18.500px/36px "DejaVu Sans", sans-serif; width: 22px; margin-left: 8px; white-space: nowrap; display: flex; justify-content: center; }
footer .tel { margin-left: 1px; }
</style>
